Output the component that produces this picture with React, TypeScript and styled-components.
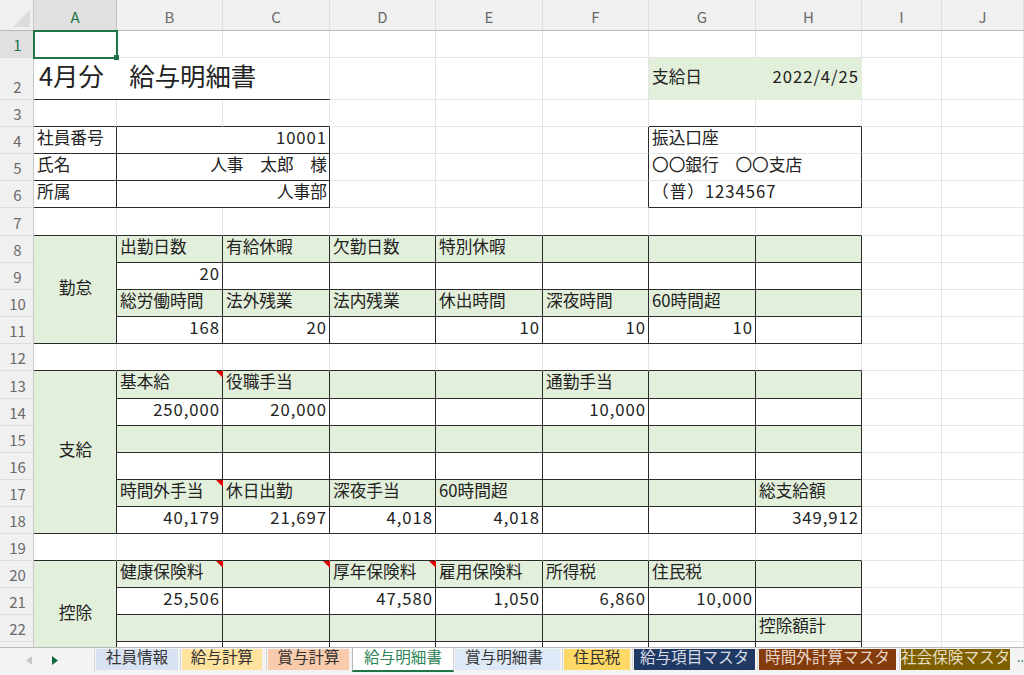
import React from "react";
import styled, { createGlobalStyle } from "styled-components";

const Global = createGlobalStyle`
  html, body { margin: 0; padding: 0; background: #fff; overflow: hidden; }
  #root { width: 1024px; height: 675px; overflow: hidden; }
`;

const GREEN = "#e2efda";
const DARK = "#2b2b2b";
const LIGHT = "#e4e4e4";
const COLS = [34, 83, 106, 107, 106, 107, 106, 107, 106, 80, 82];
const ROWS = [31, 27, 42, 27, 27, 27, 27, 28, 27, 27, 27, 27, 27, 28, 27, 27, 27, 27, 27, 27, 27, 27, 27, 27, 27];

const Window = styled.div`
  width: 1024px;
  height: 675px;
  display: flex;
  flex-direction: column;
  font-family: "Noto Sans CJK JP", "Noto Sans", sans-serif;
  color: #222;
`;

const Sheet = styled.div`
  flex: 0 0 647px;
  overflow: hidden;
  display: grid;
  grid-template-columns: ${COLS.map((c) => c + "px").join(" ")};
  grid-template-rows: ${ROWS.map((r) => r + "px").join(" ")};
`;

const Corner = styled.div`
  background: #f0f0f0;
  border-right: 1px solid #c8c8c8;
  border-bottom: 1px solid #b8b8b8;
  box-sizing: border-box;
  display: flex;
  justify-content: flex-end;
  align-items: flex-end;
  padding: 0 3px 3px 0;
`;

const ColHead = styled.div<{ $on?: boolean }>`
  background: ${(p) => (p.$on ? "#e0e0e0" : "#f0f0f0")};
  color: ${(p) => (p.$on ? "#217346" : "#6a6a6a")};
  border-right: 1px solid ${(p) => (p.$on ? "#c0c0c0" : "#dcdcdc")};
  border-bottom: 1px solid #b8b8b8;
  box-sizing: border-box;
  display: flex;
  align-items: center;
  justify-content: center;
  font-size: 15px;
  padding-top: 2px;
`;

const RowHead = styled.div<{ $on?: boolean }>`
  background: ${(p) => (p.$on ? "#e0e0e0" : "#f0f0f0")};
  color: ${(p) => (p.$on ? "#217346" : "#6a6a6a")};
  border-right: 1px solid #c8c8c8;
  border-bottom: 1px solid #dcdcdc;
  box-sizing: border-box;
  display: flex;
  align-items: flex-end;
  justify-content: center;
  font-size: 15px;
  line-height: 24px;
  padding-left: 2px;
`;

const Cell = styled.div<{
  $span?: number;
  $rows?: number;
  $fill?: boolean;
  $r?: boolean;
  $b?: boolean;
  $align?: "left" | "right" | "center";
  $num?: boolean;
  $title?: boolean;
  $tall?: boolean;
}>`
  grid-column: span ${(p) => p.$span ?? 1};
  grid-row: span ${(p) => p.$rows ?? 1};
  position: relative;
  box-sizing: border-box;
  background: ${(p) => (p.$fill ? GREEN : "#fff")};
  border-right: 1px solid ${(p) => (p.$r ? DARK : p.$fill ? "transparent" : LIGHT)};
  border-bottom: 1px solid ${(p) => (p.$b ? DARK : p.$fill ? "transparent" : LIGHT)};
  display: flex;
  align-items: center;
  justify-content: ${(p) =>
    p.$align === "right" ? "flex-end" : p.$align === "center" ? "center" : "flex-start"};
  padding: 0 2px 0 3px;
  font-size: ${(p) => (p.$title ? "25.4px" : "16.7px")};
  letter-spacing: ${(p) => (p.$num ? "0.95px" : "0")};
  line-height: 1;
  white-space: nowrap;
  color: #222;
  padding-left: ${(p) => (p.$title ? "5px" : "3px")};
  padding-bottom: ${(p) => (p.$tall ? "5px" : p.$rows ? "5px" : p.$num ? "5px" : "6px")};
`;

const Selected = styled.div`
  position: absolute;
  inset: -1px -2px -2px -1px;
  border: 2px solid #217346;
  box-sizing: border-box;
  pointer-events: none;
  z-index: 3;
`;

const Handle = styled.div`
  position: absolute;
  right: -3px;
  bottom: -3px;
  width: 5px;
  height: 5px;
  background: #217346;
  z-index: 4;
`;

const Flag = styled.span`
  position: absolute;
  right: -1px;
  top: 0;
  width: 0;
  height: 0;
  border-top: 7px solid #e00000;
  border-left: 7px solid transparent;
`;

const TabBar = styled.div`
  flex: 1;
  background: #f3f3f3;
  border-top: 1px solid #b8b8b8;
  display: flex;
  align-items: flex-start;
  box-sizing: border-box;
`;

const Nav = styled.div`
  width: 94px;
  flex: none;
  display: flex;
  align-items: center;
  gap: 20px;
  padding: 8px 0 0 26px;
  box-sizing: border-box;
`;

const Tabs = styled.div`
  display: flex;
  align-items: flex-start;
  border-left: 1px solid #c4c4c4;
  padding-left: 1px;
  height: 22px;
  margin-top: 1px;
`;

const Tab = styled.div<{ $bg: string; $fg: string; $w: number; $ml: number; $nudge?: number; $active?: boolean }>`
  width: ${(p) => p.$w}px;
  margin-left: ${(p) => p.$ml}px;
  height: ${(p) => (p.$active ? 25 : 21)}px;
  margin-top: ${(p) => (p.$active ? "-2px" : "0")};
  background: ${(p) => p.$bg};
  color: ${(p) => p.$fg};
  font-size: 15.6px;
  line-height: 15px;
  text-align: center;
  white-space: nowrap;
  box-sizing: border-box;
  border: ${(p) => (p.$active ? "1px solid #b8b8b8" : "0")};
  border-bottom: ${(p) => (p.$active ? "2px solid #217346" : "0")};
  padding-top: ${(p) => (p.$active ? "1px" : "0")};
  padding-right: ${(p) => p.$nudge ?? 0}px;
  box-shadow: ${(p) => (p.$active ? "none" : "-1px 0 0 #f3f3f3, -2px 0 0 #d6d6d6")};
`;

const More = styled.div`
  flex: none;
  font-size: 13px;
  color: #217346;
  margin-left: 7px;
  line-height: 18px;
  white-space: nowrap;
`;

type C = React.ComponentProps<typeof Cell> & { t?: string; flag?: boolean };

const g = (t?: string, flag?: boolean): C => ({ t, flag, $fill: true, $r: true, $b: true });
const w = (t?: string): C => ({ t, $r: true, $b: true, $align: "right", $num: true });
const greens = (...items: (string | undefined | [string | undefined, boolean])[]) =>
  items.map((i) => (Array.isArray(i) ? g(i[0], i[1]) : g(i)));
const whites = (...items: (string | undefined)[]) => items.map((i) => w(i));
const blanks = (n: number, b = false): C[] => Array.from({ length: n }, () => ({ $b: b }));

const label = (t: string, rows: number): C => ({ t, $rows: rows, $fill: true, $r: true, $b: true, $align: "center" });

const rowCells: C[][] = [
  /* 1 */ [{ t: "__sel" }, ...blanks(9)],
  /* 2 */ [
    { t: "4月分　給与明細書", $span: 3, $title: true, $b: true, $tall: true },
    ...blanks(3),
    { t: "支給日", $fill: true, $tall: true },
    { t: "2022/4/25", $fill: true, $align: "right", $num: true, $tall: true },
    ...blanks(2),
  ],
  /* 3 */ [{ $b: true }, { $b: true }, { $b: true }, ...blanks(3), { $b: true }, { $b: true }, ...blanks(2)],
  /* 4 */ [
    { t: "社員番号", $r: true, $b: true },
    { t: "10001", $span: 2, $r: true, $b: true, $align: "right", $num: true },
    ...blanks(2),
    { $r: true },
    { t: "振込口座" },
    { $r: true },
    ...blanks(2),
  ],
  /* 5 */ [
    { t: "氏名", $r: true, $b: true },
    { t: "人事　太郎　様", $span: 2, $r: true, $b: true, $align: "right" },
    ...blanks(2),
    { $r: true },
    { t: "〇〇銀行　〇〇支店", $span: 2, $r: true },
    ...blanks(2),
  ],
  /* 6 */ [
    { t: "所属", $r: true, $b: true },
    { t: "人事部", $span: 2, $r: true, $b: true, $align: "right" },
    ...blanks(2),
    { $r: true },
    { t: "（普）1234567", $span: 2, $r: true, $b: true, $num: true },
    ...blanks(2),
  ],
  /* 7 */ [...blanks(8, true), ...blanks(2)],
  /* 8 */ [label("勤怠", 4), ...greens("出勤日数", "有給休暇", "欠勤日数", "特別休暇", undefined, undefined, undefined), ...blanks(2)],
  /* 9 */ [...whites("20", undefined, undefined, undefined, undefined, undefined, undefined), ...blanks(2)],
  /* 10 */ [...greens("総労働時間", "法外残業", "法内残業", "休出時間", "深夜時間", "60時間超", undefined), ...blanks(2)],
  /* 11 */ [...whites("168", "20", undefined, "10", "10", "10", undefined), ...blanks(2)],
  /* 12 */ [...blanks(8, true), ...blanks(2)],
  /* 13 */ [label("支給", 6), ...greens(["基本給", true], "役職手当", undefined, undefined, "通勤手当", undefined, undefined), ...blanks(2)],
  /* 14 */ [...whites("250,000", "20,000", undefined, undefined, "10,000", undefined, undefined), ...blanks(2)],
  /* 15 */ [...greens(undefined, undefined, undefined, undefined, undefined, undefined, undefined), ...blanks(2)],
  /* 16 */ [...whites(undefined, undefined, undefined, undefined, undefined, undefined, undefined), ...blanks(2)],
  /* 17 */ [...greens(["時間外手当", true], "休日出勤", "深夜手当", "60時間超", undefined, undefined, "総支給額"), ...blanks(2)],
  /* 18 */ [...whites("40,179", "21,697", "4,018", "4,018", undefined, undefined, "349,912"), ...blanks(2)],
  /* 19 */ [...blanks(8, true), ...blanks(2)],
  /* 20 */ [label("控除", 4), ...greens(["健康保険料", true], [undefined, true], ["厚年保険料", true], "雇用保険料", "所得税", "住民税", undefined), ...blanks(2)],
  /* 21 */ [...whites("25,506", undefined, "47,580", "1,050", "6,860", "10,000", undefined), ...blanks(2)],
  /* 22 */ [...greens(undefined, undefined, undefined, undefined, undefined, undefined, "控除額計"), ...blanks(2)],
  /* 23 */ [...whites(undefined, undefined, undefined, undefined, undefined, undefined, undefined), ...blanks(2)],
];

const TABS = [
  { t: "社員情報", bg: "#d9e2f3", fg: "#333", w: 82, ml: 0 },
  { t: "給与計算", bg: "#ffe39f", fg: "#333", w: 80, ml: 4 },
  { t: "賞与計算", bg: "#f8cbad", fg: "#333", w: 81, ml: 6 },
  { t: "給与明細書", bg: "#ffffff", fg: "#2f8358", w: 102, ml: 3, active: true },
  { t: "賞与明細書", bg: "#dde9f6", fg: "#333", w: 105, ml: 1, nudge: 7 },
  { t: "住民税", bg: "#ffd966", fg: "#333", w: 66, ml: 4 },
  { t: "給与項目マスタ", bg: "#1f3864", fg: "#d8dce6", w: 121, ml: 4 },
  { t: "時間外計算マスタ", bg: "#843c0c", fg: "#e8d5c8", w: 137, ml: 4 },
  { t: "社会保険マスタ", bg: "#7f6000", fg: "#e5dcc0", w: 109, ml: 5 },
];

export default function App() {
  return (
    <Window>
      <Global />
      <Sheet>
        <Corner>
          <svg width="17" height="17" viewBox="0 0 17 17">
            <path d="M17 0V17H0Z" fill="#dcdcdc" />
          </svg>
        </Corner>
        {"ABCDEFGHIJ".split("").map((c, i) => (
          <ColHead key={c} $on={i === 0}>
            {c}
          </ColHead>
        ))}
        {rowCells.map((cells, ri) => (
          <React.Fragment key={ri}>
            <RowHead $on={ri === 0}>{ri + 1}</RowHead>
            {cells.map(({ t, flag, ...rest }, ci) =>
              t === "__sel" ? (
                <Cell key={ci}>
                  <Selected />
                  <Handle />
                </Cell>
              ) : (
                <Cell key={ci} {...rest}>
                  {t}
                  {flag && <Flag />}
                </Cell>
              )
            )}
          </React.Fragment>
        ))}
      </Sheet>
      <TabBar>
        <Nav>
          <svg width="6" height="9" viewBox="0 0 6 9">
            <path d="M6 0V9L0 4.5Z" fill="#c8c8c8" />
          </svg>
          <svg width="6" height="9" viewBox="0 0 6 9">
            <path d="M0 0V9L6 4.5Z" fill="#0f6b3c" />
          </svg>
        </Nav>
        <Tabs>
          {TABS.map((x) => (
            <Tab key={x.t} $bg={x.bg} $fg={x.fg} $w={x.w} $ml={x.ml} $nudge={x.nudge} $active={x.active}>
              {x.t}
            </Tab>
          ))}
        </Tabs>
        <More>...</More>
      </TabBar>
    </Window>
  );
}
